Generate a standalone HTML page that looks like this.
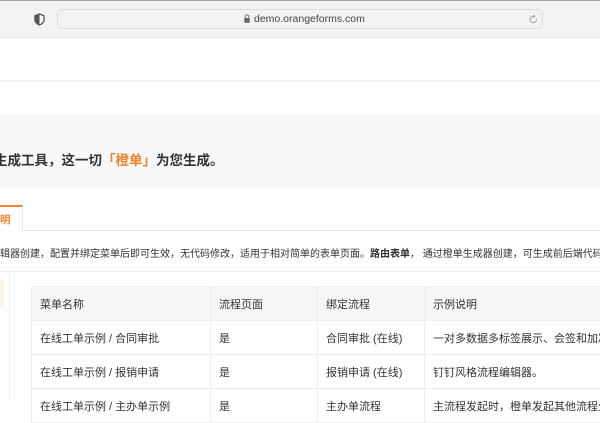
<!DOCTYPE html>
<html><head><meta charset="utf-8"><style>
*{margin:0;padding:0;box-sizing:border-box}
body{width:600px;height:400px;overflow:hidden;background:#fff;font-family:"Liberation Sans","Noto Sans CJK SC",sans-serif;position:relative}
.a{position:absolute}
td{height:34px;border-bottom:1px solid #ebeef5;border-right:1px solid #ebeef5;padding-left:8px;font-size:11px;color:#333;white-space:nowrap;overflow:hidden}
</style></head><body>
<div class="a" style="left:0;top:0;width:600px;height:38px;background:#f2f3f3;border-top:1px solid #a8a8a8;border-bottom:1px solid #e6e6e6"></div>
<svg class="a" style="left:34px;top:13px" width="11" height="13" viewBox="0 0 12 14"><path d="M6 1 L11 3 V7 C11 10 8.5 12 6 13 C3.5 12 1 10 1 7 V3 Z" fill="none" stroke="#555" stroke-width="1.4"/><path d="M6 1 V13 C3.5 12 1 10 1 7 V3 Z" fill="#555"/></svg>
<div class="a" style="left:57px;top:9px;width:486px;height:20px;border:1px solid #dcdcdc;border-radius:5px;background:#f2f3f3"></div>
<svg class="a" style="left:244px;top:14px" width="6" height="9" viewBox="0 0 6 9"><path d="M1.2 4V2.6a1.8 1.8 0 0 1 3.6 0V4" fill="none" stroke="#666" stroke-width="0.9"/><rect x="0.3" y="4" width="5.4" height="4.7" rx="0.6" fill="#666"/></svg>
<div class="a" style="left:254px;top:13px;font-size:10.5px;color:#444">demo.orangeforms.com</div>
<svg class="a" style="left:529px;top:14px" width="9" height="10" viewBox="0 0 9 10"><path d="M7.5 5.5A3.2 3.2 0 1 1 4.5 2.3" fill="none" stroke="#999" stroke-width="0.9"/><path d="M4 0.8L5.8 2.3L4 3.8" fill="none" stroke="#999" stroke-width="0.9"/></svg>
<div class="a" style="left:0;top:80px;width:600px;height:3px;background:linear-gradient(#eceef0,#fff)"></div>
<div class="a" style="left:0;top:115px;width:600px;height:73px;background:#f7f8fa"></div>
<div class="a" style="left:-6px;top:149px;font-size:13.5px;font-weight:bold;color:#333;white-space:nowrap">生成工具，这一切<span style="color:#f5822a">「橙单」</span>为您生成。</div>
<div class="a" style="left:0;top:230px;width:600px;height:1px;background:#e8e8e8"></div>
<div class="a" style="left:-10px;top:205px;width:33px;height:26px;border-top:2px solid #f5822a;border-right:1px solid #e8e8e8;background:#fff"></div>
<div class="a" style="left:0;top:212px;font-size:10.5px;font-weight:bold;color:#f5822a">明</div>
<div class="a" style="left:0;top:245px;font-size:10px;color:#333;white-space:nowrap">辑器创建，配置并绑定菜单后即可生效，无代码修改，适用于相对简单的表单页面。<b>路由表单</b>， 通过橙单生成器创建，可生成前后端代码</div>
<div class="a" style="left:0;top:271px;width:600px;height:1px;background:#eceef0"></div>
<div class="a" style="left:0;top:279px;width:4px;height:28px;background:#fdf3ea"></div>
<div class="a" style="left:9px;top:271px;width:1px;height:129px;background:#eceef0"></div>
<table class="a" style="left:31px;top:286px;border-collapse:collapse;border-top:1px solid #ebeef5;border-left:1px solid #ebeef5;width:600px;table-layout:fixed">
<colgroup><col style="width:179px"><col style="width:107px"><col style="width:107px"><col style="width:207px"></colgroup>
<tr style="background:#f5f6f8"><td style="height:32px">菜单名称</td><td>流程页面</td><td>绑定流程</td><td>示例说明</td></tr>
<tr><td>在线工单示例 / 合同审批</td><td>是</td><td>合同审批 (在线)</td><td>一对多数据多标签展示、会签和加减签</td></tr>
<tr><td>在线工单示例 / 报销申请</td><td>是</td><td>报销申请 (在线)</td><td>钉钉风格流程编辑器。</td></tr>
<tr><td>在线工单示例 / 主办单示例</td><td>是</td><td>主办单流程</td><td>主流程发起时，橙单发起其他流程分</td></tr>
</table>
</body></html>
